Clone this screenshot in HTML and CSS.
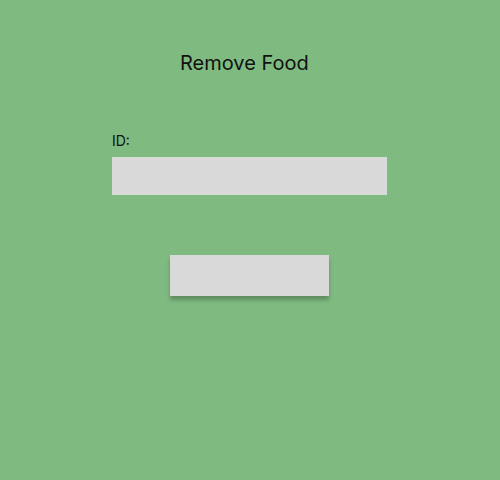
FILE: index.html
```html
<!DOCTYPE html>
<html>
<head>
<meta charset="utf-8">
<link rel="stylesheet" href="styles.css">
</head>
<body>
<div class="page">
  <h1 class="title">Remove Food</h1>
  <div class="field">
    <label class="label" for="id">ID:</label>
    <input class="input" id="id" type="text">
  </div>
  <button class="button" type="button"></button>
</div>
</body>
</html>
```
FILE: styles.css
```css
html, body {
  margin: 0;
  padding: 0;
  background: #7fbb80;
  width: 500px;
  height: 480px;
  overflow: hidden;
}
.page {
  display: flex;
  flex-direction: column;
  padding-top: 51px;
  font-family: Inter, "Noto Sans", sans-serif;
  color: #111;
}
.title {
  margin: 0 0 0 180px;
  font-size: 20px;
  font-weight: 400;
  line-height: 24px;
}
.field {
  display: flex;
  flex-direction: column;
  margin: 57px 0 0 112px;
}
.label {
  font-size: 14px;
  line-height: 17px;
  margin-bottom: 8px;
}
.input {
  box-sizing: border-box;
  width: 275px;
  height: 38px;
  border: none;
  background: #d9d9d9;
  margin: 0;
  padding: 0;
}
.button {
  align-self: flex-start;
  margin: 60px 0 0 170px;
  width: 159px;
  height: 41px;
  border: none;
  padding: 0;
  background: #d9d9d9;
  box-shadow: 0 4px 4px rgba(0, 0, 0, 0.25);
}
```
